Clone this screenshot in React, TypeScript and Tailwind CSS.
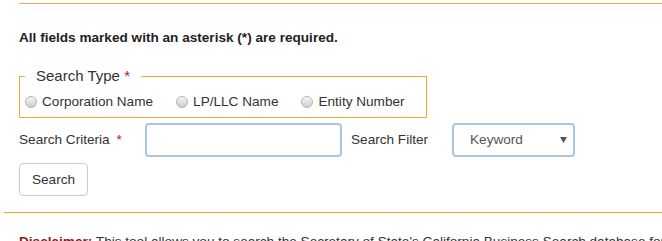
import React from "react";

const radioOptions = ["Corporation Name", "LP/LLC Name", "Entity Number"];

function Radio({ label }: { label: string }) {
  return (
    <label className="flex items-center gap-[5px] mr-[23px] last:mr-0">
      <span className="block w-3 h-3 rounded-full border border-[#b4b4b4] bg-linear-to-b from-[#f6f6f6] to-[#cdcdcd]"></span>
      <span>{label}</span>
    </label>
  );
}

export default function App() {
  return (
    <div className="w-[662px] h-[241px] overflow-hidden bg-white text-[#333] text-[13.6px] leading-[18px] font-['Liberation_Sans',Arial,sans-serif]">
      <div className="w-[900px]">
        <div className="mt-[3px] ml-[19px] border-t border-[#e8ae4c]"></div>

        <div className="ml-[19px]">
          <p className="mt-[25px] font-bold text-[#222]">All fields marked with an asterisk (*) are required.</p>

          <fieldset className="mt-[19px] w-[408px] border border-[#f0aa2e] pl-[5px] pb-[6px]">
            <legend className="px-[11px] text-[15px] leading-[20px]">
              Search Type <span className="text-[#9b1c1c]">*</span>
            </legend>
            <div className="flex items-center mt-[7px]">
              {radioOptions.map((option) => (
                <Radio key={option} label={option} />
              ))}
            </div>
          </fieldset>

          <div className="flex items-center mt-[5px] h-[34px]">
            <div className="w-[126px]">
              Search Criteria <span className="ml-[3px] text-[#9b1c1c]">*</span>
            </div>
            <input
              type="text"
              className="w-[197px] h-[34px] rounded-[4px] border-2 border-[#a8c6e1] bg-white outline-none"
            />
            <div className="ml-[9px] w-[101px]">Search Filter</div>
            <div className="flex items-center justify-between w-[123px] h-[34px] rounded-[4px] border-2 border-[#a8c6e1] pl-4 pr-[6px] text-[#555]">
              <span>Keyword</span>
              <svg width="7" height="6" viewBox="0 0 7 6">
                <path d="M0 0 L7 0 L3.5 6 Z" fill="#555" />
              </svg>
            </div>
          </div>

          <button className="block mt-[6px] w-[69px] h-[33px] rounded-[4px] border border-[#ccc] bg-white text-[#333]">
            Search
          </button>
        </div>

        <div className="mt-[16px] ml-[4px] border-t border-[#f4a623]"></div>

        <p className="mt-[20px] ml-[19px] whitespace-nowrap">
          <span className="font-bold text-[#8b1a1a]">Disclaimer:</span> This tool allows you to search the Secretary of State's California Business Search database for information about corporations, limited liability companies and limited partnerships.
        </p>
      </div>
    </div>
  );
}
